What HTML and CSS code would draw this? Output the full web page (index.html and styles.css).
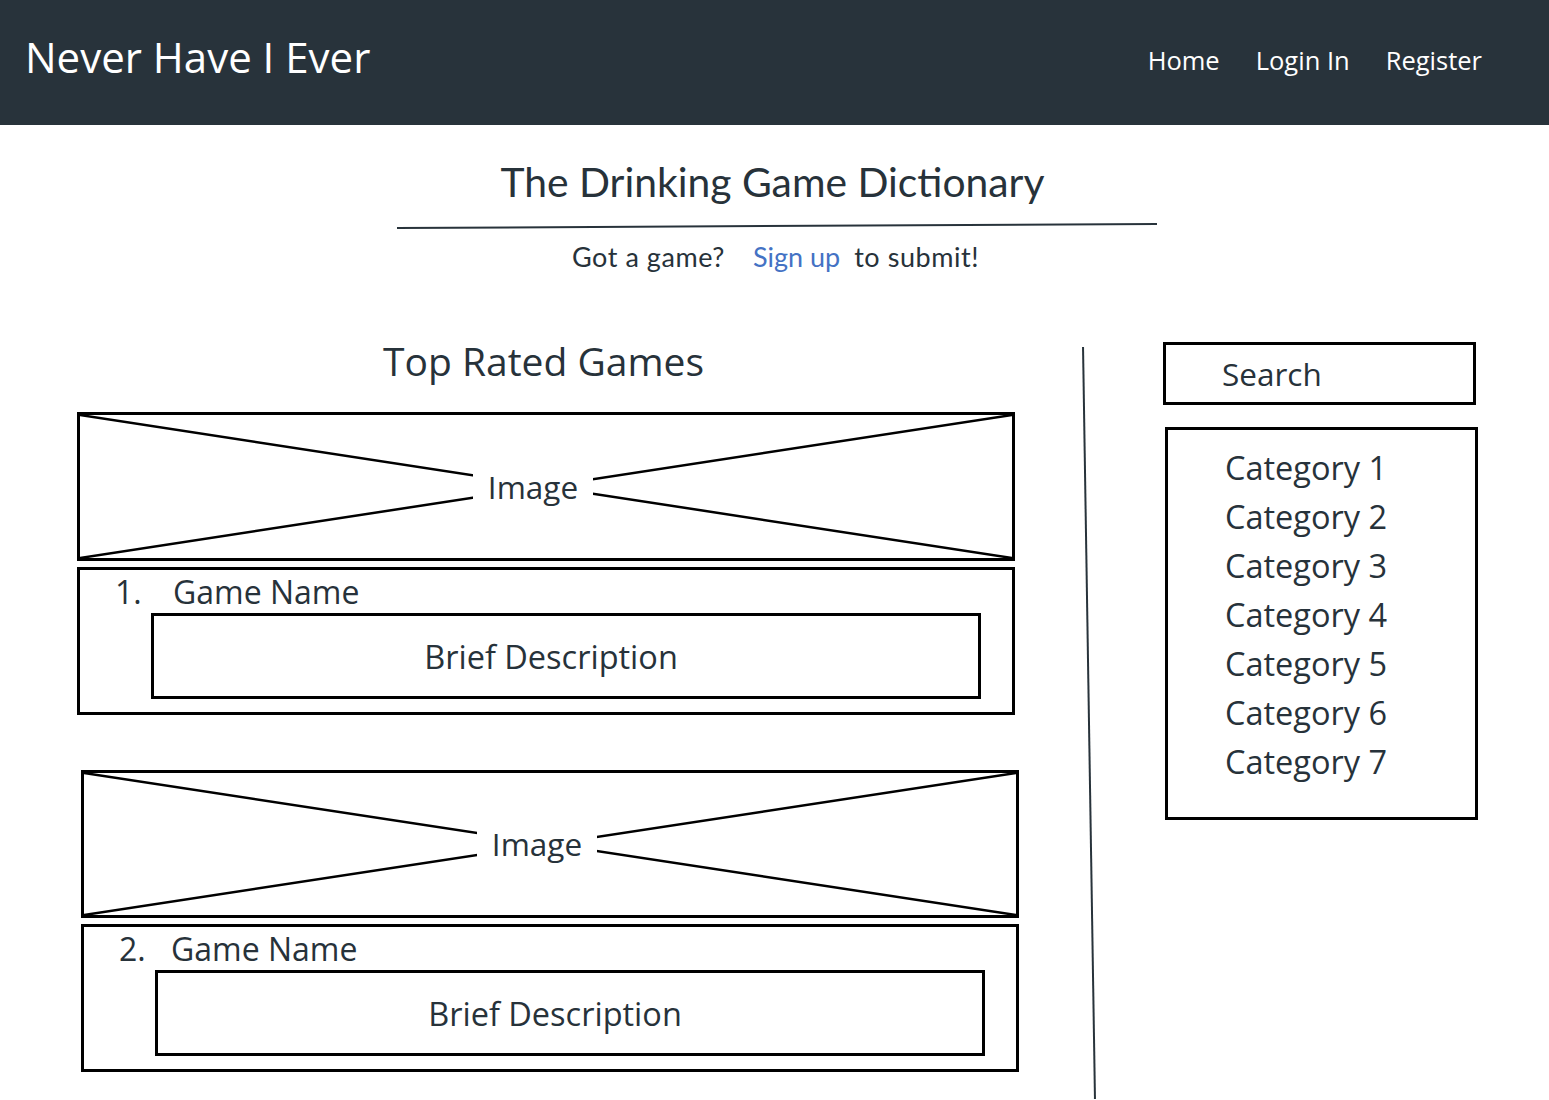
FILE: index.html
```html
<!DOCTYPE html>
<html lang="en">
<head>
<meta charset="utf-8">
<title>Never Have I Ever</title>
<link rel="stylesheet" href="styles.css">
</head>
<body>
<header class="topbar">
  <div class="brand">Never Have I Ever</div>
  <nav class="nav">
    <a href="#">Home</a>
    <a href="#">Login In</a>
    <a href="#">Register</a>
  </nav>
</header>

<section class="hero">
  <h1 class="hero-title">The Drinking Game Dictionary</h1>
  <div class="rule"></div>
  <p class="cta"><span class="cta-text">Got a game?</span><a class="cta-link" href="#">Sign up</a><span class="cta-text cta-end">to submit!</span></p>
</section>

<main class="content">
  <section class="games">
    <h2 class="games-title">Top Rated Games</h2>

    <article class="game">
      <div class="img-ph">
        <svg class="img-x" viewBox="0 0 100 100" preserveAspectRatio="none">
          <line x1="0" y1="0" x2="100" y2="100" vector-effect="non-scaling-stroke"/>
          <line x1="100" y1="0" x2="0" y2="100" vector-effect="non-scaling-stroke"/>
        </svg>
        <span class="img-label">Image</span>
      </div>
      <div class="info">
        <div class="name"><span class="num">1.</span>Game Name</div>
        <div class="desc">Brief Description</div>
      </div>
    </article>

    <article class="game game-second">
      <div class="img-ph">
        <svg class="img-x" viewBox="0 0 100 100" preserveAspectRatio="none">
          <line x1="0" y1="0" x2="100" y2="100" vector-effect="non-scaling-stroke"/>
          <line x1="100" y1="0" x2="0" y2="100" vector-effect="non-scaling-stroke"/>
        </svg>
        <span class="img-label">Image</span>
      </div>
      <div class="info">
        <div class="name"><span class="num">2.</span>Game Name</div>
        <div class="desc">Brief Description</div>
      </div>
    </article>
  </section>

  <div class="divider"></div>

  <aside class="sidebar">
    <div class="search">Search</div>
    <ul class="cats">
      <li>Category 1</li>
      <li>Category 2</li>
      <li>Category 3</li>
      <li>Category 4</li>
      <li>Category 5</li>
      <li>Category 6</li>
      <li>Category 7</li>
    </ul>
  </aside>
</main>
</body>
</html>
```

FILE: styles.css
```css
* { box-sizing: border-box; }

html, body {
  margin: 0;
  height: 100%;
  overflow: hidden;
}

body {
  background: #ffffff;
  color: #27323a;
  font-family: "Open Sans", "DejaVu Sans", sans-serif;
}

/* ---------- top bar ---------- */
.topbar {
  height: 125px;
  background: #28333b;
  display: flex;
  align-items: center;
  justify-content: space-between;
  padding: 0 67px 0 25px;
}

.brand {
  color: #ffffff;
  font-size: 42px;
  line-height: 42px;
  margin-bottom: 12px;
}

.nav {
  display: flex;
  gap: 36px;
  margin-bottom: 6px;
}

.nav a {
  color: #ffffff;
  font-size: 25.5px;
  line-height: 34px;
  text-decoration: none;
}

/* ---------- hero ---------- */
.hero {
  display: flex;
  flex-direction: column;
  align-items: center;
}

.hero-title {
  margin: 33px 0 0;
  font-family: Lato, "Open Sans", sans-serif;
  font-weight: 400;
  font-size: 40.8px;
  line-height: 48px;
  color: #27323a;
  padding-right: 4px;
}

.rule {
  width: 760px;
  height: 2px;
  margin-top: 19px;
  margin-left: 5px;
  background: #28333b;
  transform: rotate(-0.3deg);
}

.cta {
  margin: 14px 0 0;
  display: flex;
  gap: 28px;
  font-family: Lato, "Open Sans", sans-serif;
  font-size: 27px;
  line-height: 32px;
  padding-left: 2px;
}

.cta-text {
  letter-spacing: 0.55px;
}

.cta-link {
  color: #4472c4;
  text-decoration: none;
}

.cta-end {
  margin-left: -14px;
}

/* ---------- main ---------- */
.content {
  display: flex;
  align-items: flex-start;
  padding: 64px 0 0 77px;
}

.games {
  width: 941px;
  flex: none;
}

.games-title {
  margin: 0 0 27px;
  text-align: center;
  font-weight: 400;
  font-size: 39px;
  line-height: 48px;
  padding-right: 8px;
}

.game {
  width: 938px;
}

.game-second {
  margin-top: 55px;
  margin-left: 4px;
}

.img-ph {
  position: relative;
  height: 149px;
  border: 3px solid #000;
  display: flex;
  align-items: center;
  justify-content: center;
}

.game-second .img-ph {
  height: 148px;
}

.img-x {
  position: absolute;
  inset: 0;
  width: 100%;
  height: 100%;
}

.img-x line {
  stroke: #000;
  stroke-width: 2.5;
}

.img-label {
  position: relative;
  background: #fff;
  font-size: 31.5px;
  line-height: 40px;
  padding: 0 15px;
  margin-right: 26px;
}

.info {
  margin-top: 6px;
  height: 148px;
  border: 3px solid #000;
  padding: 1px 0 0 35px;
}

.name {
  font-size: 32px;
  line-height: 41px;
  display: flex;
}

.num {
  width: 58px;
}

.game-second .num {
  width: 52px;
}

.desc {
  margin: 1px 31px 0 36px;
  height: 86px;
  border: 3px solid #000;
  display: flex;
  align-items: center;
  justify-content: center;
  padding-right: 30px;
  font-size: 32.5px;
}

/* ---------- divider ---------- */
.divider {
  flex: none;
  width: 2px;
  height: 752px;
  margin: 10px 0 0 70px;
  background: #28333b;
  transform: rotate(-0.91deg);
}

/* ---------- sidebar ---------- */
.sidebar {
  margin: 5px 0 0 73px;
  width: 315px;
}

.search {
  width: 313px;
  height: 63px;
  border: 3px solid #000;
  padding-left: 56px;
  font-size: 31.5px;
  line-height: 57px;
}

.cats {
  list-style: none;
  margin: 22px 0 0 2px;
  width: 313px;
  height: 393px;
  border: 3px solid #000;
  padding: 13px 0 0 57px;
}

.cats li {
  font-size: 32.5px;
  line-height: 49px;
}
```
